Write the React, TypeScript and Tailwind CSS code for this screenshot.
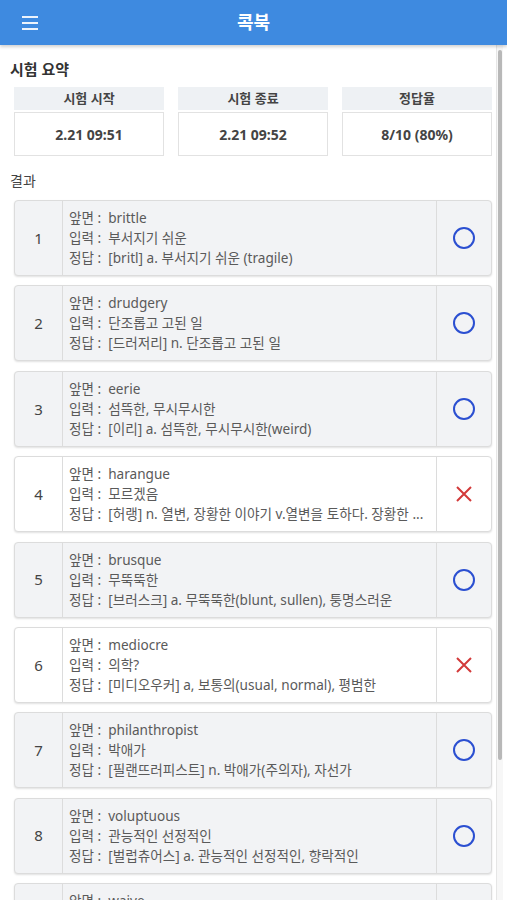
import React from "react";

// quiz result rows
const results = [
  { front: "brittle", input: "부서지기 쉬운", answer: "[britl] a. 부서지기 쉬운 (tragile)", ok: true },
  { front: "drudgery", input: "단조롭고 고된 일", answer: "[드러저리] n. 단조롭고 고된 일", ok: true },
  { front: "eerie", input: "섬뜩한, 무시무시한", answer: "[이리] a. 섬뜩한, 무시무시한(weird)", ok: true },
  { front: "harangue", input: "모르겠음", answer: "[허랭] n. 열변, 장황한 이야기 v.열변을 토하다. 장황한 ...", ok: false },
  { front: "brusque", input: "무뚝뚝한", answer: "[브러스크] a. 무뚝뚝한(blunt, sullen), 퉁명스러운", ok: true },
  { front: "mediocre", input: "의학?", answer: "[미디오우커] a, 보통의(usual, normal), 평범한", ok: false },
  { front: "philanthropist", input: "박애가", answer: "[필랜뜨러피스트] n. 박애가(주의자), 자선가", ok: true },
  { front: "voluptuous", input: "관능적인 선정적인", answer: "[벌럽츄어스] a. 관능적인 선정적인, 향락적인", ok: true },
  { front: "waive", input: "포기하다", answer: "[웨이브] v. 포기하다, 권리를 버리다", ok: true },
];

const summary = [
  { label: "시험 시작", value: "2.21 09:51" },
  { label: "시험 종료", value: "2.21 09:52" },
  { label: "정답율", value: "8/10 (80%)" },
];

const Row = ({ idx, r }: { idx: number; r: (typeof results)[0] }) => (
  <div
    className={`flex h-[76px] shrink-0 rounded-[4px] border border-[#dcdcdc] shadow-[0_1px_2px_rgba(0,0,0,0.12)] ${
      r.ok ? "bg-[#f2f3f5]" : "bg-white"
    }`}
  >
    <div className="w-[48px] shrink-0 flex items-center justify-center border-r border-[#dcdcdc] text-[15px] text-[#444]">
      {idx}
    </div>
    <div className="flex-1 min-w-0 flex flex-col justify-center pl-[6px] pr-[6px] text-[13.6px] leading-[20px] text-[#5a5a5a]">
      <div className="whitespace-nowrap overflow-hidden">
        앞면 :<span className="ml-[7px]">{r.front}</span>
      </div>
      <div className="whitespace-nowrap overflow-hidden">
        입력 :<span className="ml-[7px]">{r.input}</span>
      </div>
      <div className="whitespace-nowrap overflow-hidden">
        정답 :<span className="ml-[7px]">{r.answer}</span>
      </div>
    </div>
    <div className="w-[55px] shrink-0 flex items-center justify-center border-l border-[#dcdcdc]">
      {r.ok ? (
        <svg width="24" height="24" viewBox="0 0 24 24">
          <circle cx="12" cy="12" r="10" fill="none" stroke="#2b4fd1" strokeWidth="2" />
        </svg>
      ) : (
        <svg width="18" height="18" viewBox="0 0 18 18">
          <path d="M2 2 L16 16 M16 2 L2 16" stroke="#d33a3a" strokeWidth="2" />
        </svg>
      )}
    </div>
  </div>
);

export default function App() {
  return (
    <div
      className="h-[900px] w-full overflow-hidden bg-white flex flex-col"
      style={{ fontFamily: '"Noto Sans", "Noto Sans CJK KR", sans-serif' }}
    >
      <header className="h-[45px] shrink-0 bg-[#3e8ae0] flex items-center relative shadow-[0_2px_3px_rgba(0,0,0,0.18)] z-10">
        <div className="w-[60px] flex flex-col gap-[4px] pl-[22px]">
          <span className="block w-[16px] h-[2px] bg-white/90" />
          <span className="block w-[16px] h-[2px] bg-white/90" />
          <span className="block w-[16px] h-[2px] bg-white/90" />
        </div>
        <div className="flex-1 text-center text-white font-bold text-[18px] pr-[60px]">콕북</div>
      </header>

      <div className="flex flex-1 min-h-0">
        <main className="flex-1 min-w-0 flex flex-col pl-[14px] pr-[4px]">
          <h2 className="-ml-[4px] mt-[13px] text-[15px] font-bold text-[#333] leading-[22px]">시험 요약</h2>
          <div className="mt-[7px] grid grid-cols-3 gap-[14px]">
            {summary.map((s) => (
              <div key={s.label} className="flex flex-col">
                <div className="h-[23px] bg-[#eef1f4] flex items-center justify-center text-[13px] font-bold text-[#444]">
                  {s.label}
                </div>
                <div className="mt-[2px] h-[44px] border border-[#e2e2e2] flex items-center justify-center text-[14px] font-bold text-[#444]">
                  {s.value}
                </div>
              </div>
            ))}
          </div>
          <h3 className="-ml-[4px] mt-[14px] text-[14px] text-[#444] leading-[22px]">결과</h3>
          <div className="mt-[8px] flex flex-col gap-[9.4px]">
            {results.map((r, i) => (
              <Row key={i} idx={i + 1} r={r} />
            ))}
          </div>
        </main>
        <div className="w-[7px] shrink-0 border-l border-[#e6e6e6] bg-[#f7f7f7] pt-[5px] px-[1px]">
          <div className="h-[710px] w-[4px] rounded-full bg-[#b8b8b8]" />
        </div>
        <div className="w-[4px] shrink-0" />
      </div>
    </div>
  );
}
